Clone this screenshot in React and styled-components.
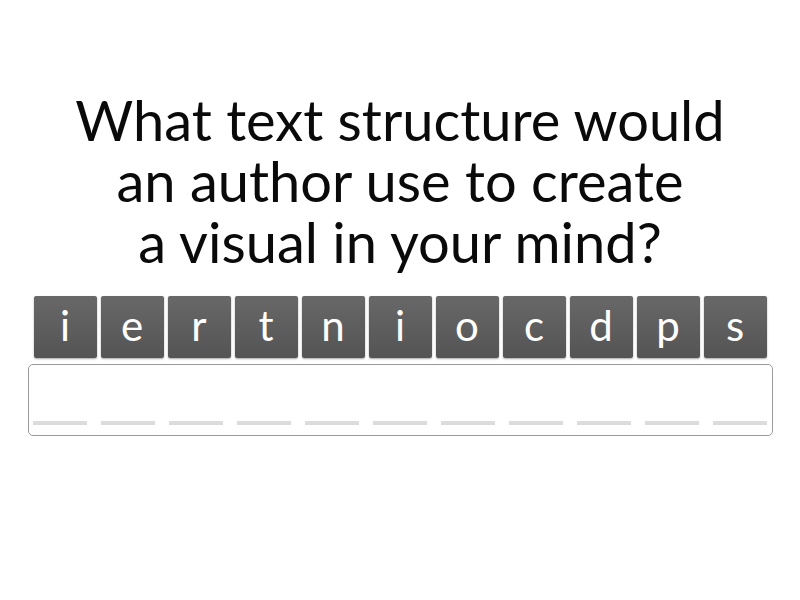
import React from 'react';
import styled, { createGlobalStyle } from 'styled-components';

const GlobalStyle = createGlobalStyle`
  html, body {
    margin: 0;
    padding: 0;
    background: #fff;
  }
  body {
    font-family: Lato, "Open Sans", sans-serif;
  }
`;

const Page = styled.div`
  width: 800px;
  height: 600px;
  display: flex;
  flex-direction: column;
  align-items: center;
  box-sizing: border-box;
  padding-top: 89px;
`;

const Question = styled.h1`
  margin: 0;
  width: 760px;
  text-align: center;
  font-family: Lato, sans-serif;
  font-weight: 400;
  font-size: 56px;
  line-height: 61px;
  color: #0a0a0a;
`;

const Tiles = styled.div`
  display: flex;
  gap: 4px;
  margin-top: 24px;
`;

const Tile = styled.div`
  width: 63px;
  height: 62px;
  border-radius: 2px;
  background: linear-gradient(#686868, #545454);
  box-shadow: 0 1px 2px rgba(0, 0, 0, 0.35);
  color: #fff;
  display: flex;
  align-items: center;
  justify-content: center;
  font-size: 42px;
  line-height: 1;
  padding-bottom: 4px;
  box-sizing: border-box;
`;

const AnswerBox = styled.div`
  margin-top: 6px;
  width: 745px;
  height: 72px;
  box-sizing: border-box;
  border: 1px solid #9a9a9a;
  border-radius: 5px;
  display: flex;
  align-items: flex-end;
  justify-content: center;
  gap: 14px;
  padding-bottom: 10px;
`;

const Blank = styled.div`
  width: 54px;
  height: 4px;
  background: #dcdcdc;
`;

const letters = ['i', 'e', 'r', 't', 'n', 'i', 'o', 'c', 'd', 'p', 's'];

export default function App() {
  return (
    <>
      <GlobalStyle />
      <Page>
        <Question>
          What text structure would
          <br />
          an author use to create
          <br />
          a visual in your mind?
        </Question>
        <Tiles>
          {letters.map((l, i) => (
            <Tile key={i}>{l}</Tile>
          ))}
        </Tiles>
        <AnswerBox>
          {letters.map((_, i) => (
            <Blank key={i} />
          ))}
        </AnswerBox>
      </Page>
    </>
  );
}
